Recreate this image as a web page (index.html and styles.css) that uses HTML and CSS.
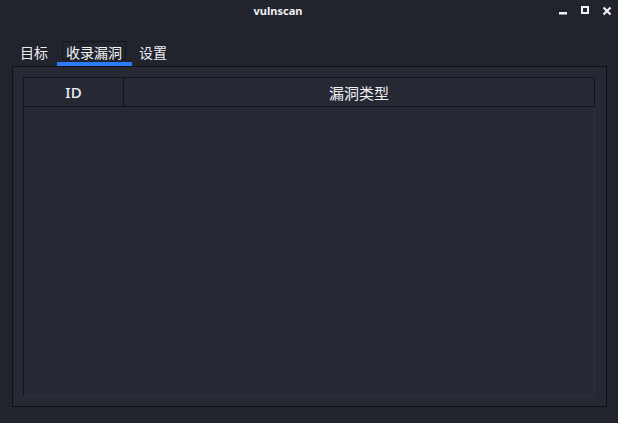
FILE: index.html
```html
<!DOCTYPE html>
<html lang="zh">
<head>
<meta charset="utf-8">
<title>vulnscan</title>
<link rel="stylesheet" href="styles.css">
</head>
<body>
<div class="window">
  <div class="titlebar">
    <div class="title">vulnscan</div>
    <div class="controls">
      <svg class="ctl" width="20" height="22" viewBox="0 0 20 22"><rect x="3" y="12" width="8" height="2.5" fill="#f2f2f5"/></svg>
      <svg class="ctl" width="20" height="22" viewBox="0 0 20 22"><rect x="6" y="7" width="6" height="6" fill="none" stroke="#f2f2f5" stroke-width="2"/></svg>
      <svg class="ctl" width="22" height="22" viewBox="0 0 22 22"><path d="M7.5 7.5 L14.5 14.5 M14.5 7.5 L7.5 14.5" stroke="#f2f2f5" stroke-width="2.2"/></svg>
    </div>
  </div>
  <div class="tabs">
    <div class="tab tab-first"><span class="label">目标</span></div>
    <div class="tab tab-active"><span class="label">收录漏洞</span></div>
    <div class="tab tab-last"><span class="label">设置</span></div>
  </div>
  <div class="panel">
    <div class="table">
      <div class="thead">
        <div class="th th-id">ID</div>
        <div class="th th-type">漏洞类型</div>
      </div>
      <div class="tbody"></div>
    </div>
  </div>
</div>
</body>
</html>
```

FILE: styles.css
```css
html, body {
  margin: 0;
  padding: 0;
  background: #22242d;
}
body {
  width: 618px;
  height: 423px;
  overflow: hidden;
  font-family: "Noto Sans", "Noto Sans CJK SC", sans-serif;
  color: #e8e9ef;
}
.window {
  display: flex;
  flex-direction: column;
  height: 423px;
}
.titlebar {
  height: 24px;
  display: flex;
  align-items: flex-start;
}
.title {
  flex: 1;
  text-align: center;
  font-family: "Noto Sans", sans-serif;
  font-weight: bold;
  font-size: 11px;
  line-height: 22px;
  color: #f0f0f4;
}
.controls {
  display: flex;
  width: 62px;
}
.ctl {
  display: block;
}
.tabs {
  display: flex;
  margin-top: 17px;
  padding-left: 10px;
  height: 25px;
}
.tab {
  display: flex;
  flex-direction: column;
  box-sizing: border-box;
  height: 25px;
  border-bottom: 4px solid transparent;
  font-family: "Noto Sans CJK SC", sans-serif;
  font-size: 14px;
}
.tab-first { padding: 0 8px 0 9px; }
.tab-active { padding: 0 6px 0 5px; border-bottom-color: #2a7bf5; }
.tab-last { padding: 0 6px; }
.label {
  display: block;
  height: 19px;
  line-height: 21px;
  box-sizing: border-box;
  padding: 0 3px;
  border: 1px solid transparent;
  color: #eceef3;
}
.tab-first .label, .tab-last .label { padding: 0; }
.tab-active .label {
  border-color: #15171d;
  color: #f4f5f8;
}
.panel {
  margin: 0 11px 0 12px;
  height: 341px;
  box-sizing: border-box;
  border: 1px solid #0e1015;
  background: #262833;
  padding: 10px 11px 10px 10px;
  display: flex;
}
.table {
  flex: 1;
  display: flex;
  flex-direction: column;
  border-top: 1px solid #13151b;
  border-left: 1px solid #13151b;
  border-right: 1px solid #2e3144;
  border-bottom: 1px solid #2e3144;
  background: #262833;
}
.thead {
  display: flex;
  height: 28px;
  border-bottom: 1px solid #11131a;
  margin-right: -1px;
}
.th {
  box-sizing: border-box;
  display: flex;
  align-items: center;
  justify-content: center;
  font-family: "Noto Sans", "Noto Sans CJK SC", sans-serif;
  font-size: 15px;
  color: #f0f1f5;
  border-right: 1px solid #11131a;
}
.th-id { width: 100px; font-weight: 500; }
.th-type { flex: 1; font-family: "Noto Sans CJK SC", sans-serif; }
.tbody { flex: 1; }
```
